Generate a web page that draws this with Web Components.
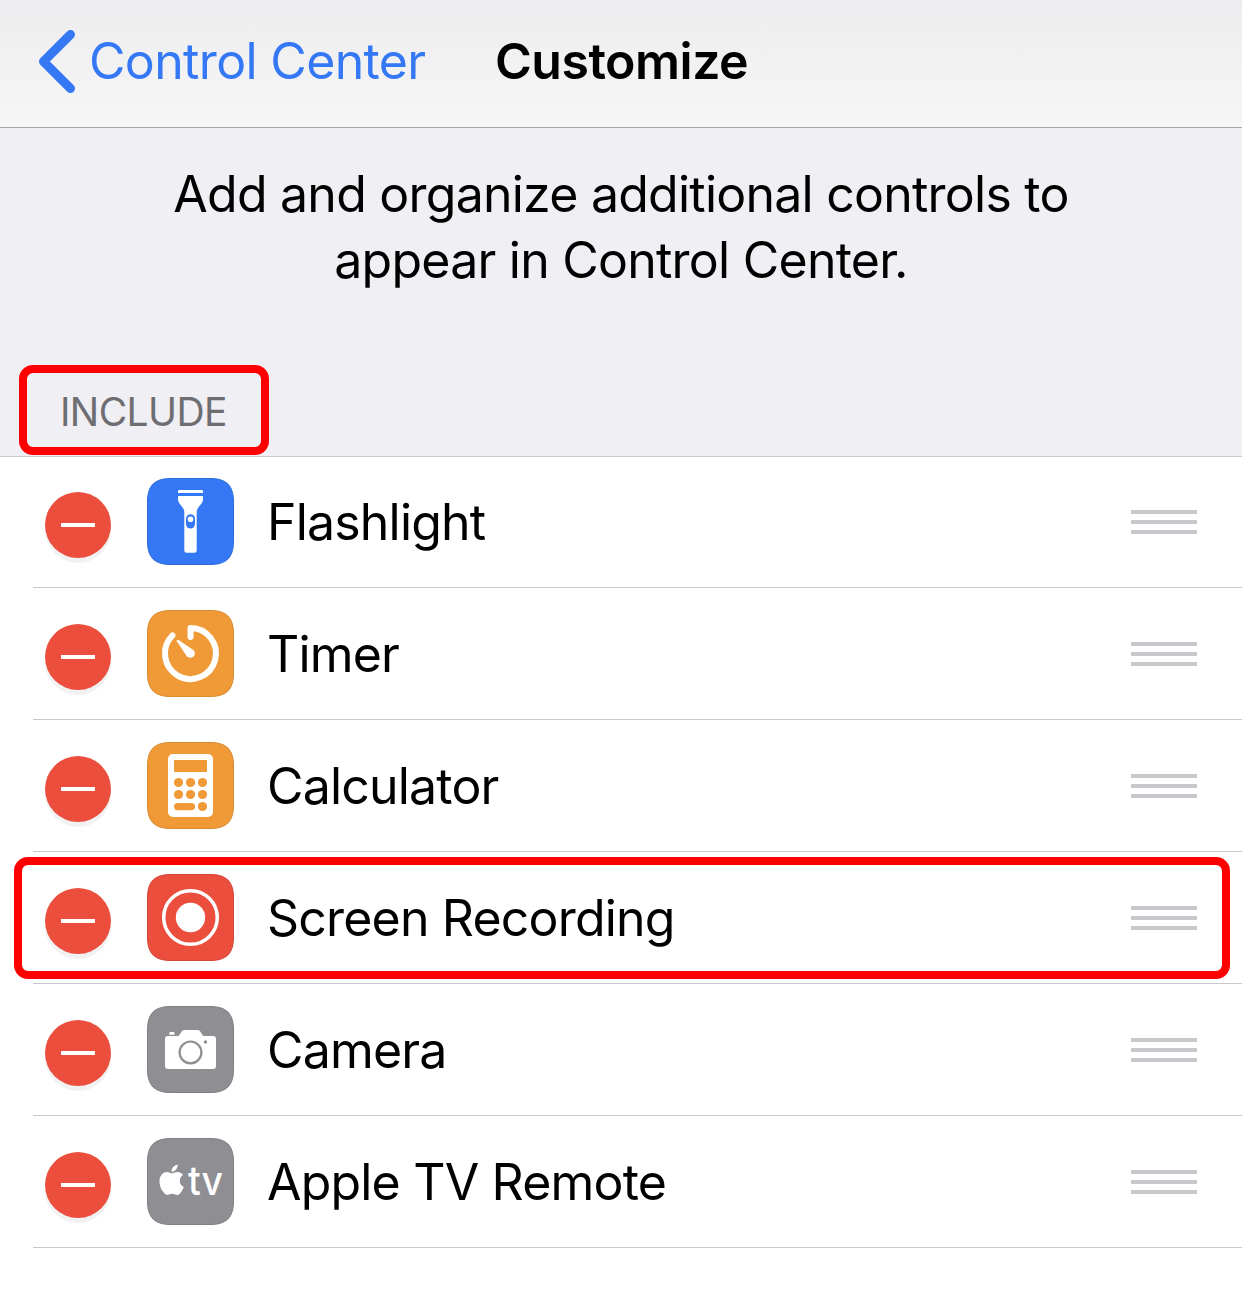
<!DOCTYPE html>
<html lang="en">
<head>
<meta charset="utf-8">
<title>Customize</title>
<style>
html,body{margin:0;padding:0;background:#fff}
body{font-family:Inter,"Liberation Sans",sans-serif;color:#000;-webkit-font-smoothing:antialiased}
</style>
</head>
<body>
<control-settings></control-settings>
<script>
const define = (name, html) => customElements.define(name, class extends HTMLElement {
  constructor() {
    super();
    this.attachShadow({mode: 'open'}).innerHTML = html;
  }
});

const glyphs = {
  flashlight: ['#3478f6', `<path fill="#fff" d="M31 15V13.2Q31 12 32.2 12H54.8Q56 12 56 13.2V15ZM31 18H56V21.5C56 26 49.7 29 49.7 34V72.5Q49.7 74.8 47.4 74.8H39.6Q37.3 74.8 37.3 72.5V34C37.3 29 31 26 31 21.5Z"/><rect x="39" y="36.3" width="9" height="14.2" rx="4.5" fill="#3478f6"/><circle cx="43.5" cy="41.2" r="2.8" fill="#fff"/>`],
  timer: ['#f09a37', `<path fill="none" stroke="#fff" stroke-width="6" stroke-linecap="round" stroke-linejoin="round" d="M43.5 27V18A25.5 25.5 0 1 1 25.5 25.4"/><path fill="#fff" d="M31.2 29.8L46.4 39.9A4.6 4.6 0 1 1 39.8 46.3L29.8 31.2Q29.3 29.3 31.2 29.8Z"/>`],
  calculator: ['#f09a37', `<rect x="21" y="12" width="45" height="63" rx="5" fill="#fff"/><g fill="#f09a37"><rect x="27" y="18" width="33" height="12" rx="1"/><circle cx="31.5" cy="40.5" r="4.6"/><circle cx="43.5" cy="40.5" r="4.6"/><circle cx="55.5" cy="40.5" r="4.6"/><circle cx="31.5" cy="52.5" r="4.6"/><circle cx="43.5" cy="52.5" r="4.6"/><circle cx="55.5" cy="52.5" r="4.6"/><rect x="27" y="61" width="21" height="7.2" rx="3.6"/><circle cx="55.5" cy="64.5" r="4.6"/></g>`],
  record: ['#eb4e3d', `<circle cx="43.5" cy="43.5" r="26.8" fill="none" stroke="#fff" stroke-width="3.5"/><circle cx="43.5" cy="43.5" r="14.7" fill="#fff"/>`],
  camera: ['#8e8e93', `<path fill="#fff" d="M22.3 28.7V27Q22.3 26 23.3 26H26.5Q27.5 26 27.5 27V28.7ZM21 30H30.5C34 30 33.3 24 37.5 24H50.5C54.7 24 54 30 57.5 30H66Q69 30 69 33V60Q69 63 66 63H21Q18 63 18 60V33Q18 30 21 30Z"/><circle cx="43.5" cy="46.4" r="10.9" fill="none" stroke="#8e8e93" stroke-width="2.2"/><circle cx="58.5" cy="36" r="1.7" fill="#8e8e93"/>`],
  tv: ['#8e8e93', `<path fill="#fff" transform="translate(9.7 26.7) scale(1.245 1.26)" d="M12.152 6.896c-.948 0-2.415-1.078-3.96-1.04-2.04.027-3.91 1.183-4.961 3.014-2.117 3.675-.546 9.103 1.519 12.09 1.013 1.454 2.208 3.09 3.792 3.039 1.52-.065 2.09-.987 3.935-.987 1.831 0 2.35.987 3.96.948 1.637-.026 2.676-1.48 3.676-2.948 1.156-1.688 1.636-3.325 1.662-3.415-.039-.013-3.182-1.221-3.22-4.857-.026-3.04 2.48-4.494 2.597-4.559-1.429-2.09-3.623-2.324-4.39-2.376-2-.156-3.675 1.09-4.61 1.09zM15.53 3.83c.843-1.012 1.4-2.427 1.245-3.83-1.207.052-2.662.805-3.532 1.818-.78.896-1.454 2.338-1.273 3.714 1.338.104 2.715-.688 3.559-1.701"/><text x="41" y="56.8" font-size="40" font-weight="500" fill="#fff" textLength="35" lengthAdjust="spacingAndGlyphs">tv</text>`]
};

customElements.define('app-icon', class extends HTMLElement {
  connectedCallback() {
    if (this.shadowRoot) return;
    const [color, art] = glyphs[this.getAttribute('name')];
    this.attachShadow({mode: 'open'}).innerHTML = `<style>:host{display:block;width:87px;height:87px;flex:none}svg{display:block}text{font-family:Inter,sans-serif}</style>
    <svg width="87" height="87" viewBox="0 0 87 87"><path d="M24 .5H63C79.500 .5 86.5 7.500 86.5 24V63C86.5 79.500 79.500 86.5 63 86.5H24C7.500 86.5 .5 79.500 .5 63V24C.5 7.500 7.500 .5 24 .5Z" fill="${color}" stroke="${color}"/><path d="M24 .5H63C79.500 .5 86.5 7.500 86.5 24V63C86.5 79.500 79.500 86.5 63 86.5H24C7.500 86.5 .5 79.500 .5 63V24C.5 7.500 7.500 .5 24 .5Z" fill="none" stroke="#000" stroke-opacity=".1"/>${art}</svg>`;
  }
});

define('remove-button', `<style>:host{display:flex;align-items:center;justify-content:center;flex:none;width:66px;height:66px;border-radius:50%;background:#eb4e3d;box-shadow:0 5px 0 #f2f2f2}i{width:34px;height:4px;background:#fff}</style><i></i>`);

define('drag-handle', `<style>:host{display:flex;flex-direction:column;gap:6px;flex:none;width:66px}i{height:4px;background:#c7c7cc}</style><i></i><i></i><i></i>`);

define('highlight-box', `<style>:host{display:block;position:absolute;box-sizing:border-box;border:8px solid #f00;border-radius:14px;pointer-events:none}</style>`);

define('control-row', `<style>
:host{display:flex;height:132px;box-sizing:border-box;padding-left:33px;position:relative}
.line{flex:1;display:flex;align-items:center;border-bottom:1px solid #c8c7cc;padding:0 45px 0 12px}
remove-button{margin-top:7px}
::slotted(app-icon){margin-left:36px}
.label{flex:1;margin:0 0 0 33px;font-size:50px;line-height:60px;white-space:nowrap;letter-spacing:-.81px}
drag-handle{margin-top:1px}
.mark{display:none}
:host([highlighted]) .mark{display:block;left:14px;right:12px;top:5px;height:122px}
</style>
<div class="line"><remove-button></remove-button><slot name="icon"></slot><span class="label"><slot></slot></span><drag-handle></drag-handle></div>
<highlight-box class="mark"></highlight-box>`);

define('nav-bar', `<style>
:host{display:flex;align-items:center;box-sizing:border-box;height:128px;border-bottom:1px solid #a7a7aa;background:linear-gradient(#ededef,#f6f6f7);padding:0 0 4px 38px}
svg{display:block;flex:none}
.back{font-size:50px;line-height:60px;color:#3478f6;margin:0 0 2px 13px;width:406px;white-space:nowrap;letter-spacing:-.65px}
.title{font-size:50px;line-height:60px;font-weight:600;margin-bottom:2px;white-space:nowrap;letter-spacing:-.5px}
</style>
<svg width="38" height="64" viewBox="38 30 38 64"><path d="M70.5 34.5L43.5 61.5L70.5 88.5" fill="none" stroke="#3478f6" stroke-width="9" stroke-linecap="round" stroke-linejoin="round"/></svg>
<span class="back"><slot name="back"></slot></span><span class="title"><slot></slot></span>`);

define('section-intro', `<style>
:host{display:flex;flex-direction:column;justify-content:space-between;box-sizing:border-box;height:329px;background:#efeff4;border-bottom:1px solid #c8c7cc;padding-top:33px;position:relative}
.text{text-align:center;font-size:50px;line-height:66px;white-space:nowrap;letter-spacing:-.76px}
.head{padding:0 0 20px 60px;font-size:39px;line-height:48px;color:#6d6d72;letter-spacing:-.6px}
highlight-box{left:19px;top:237px;width:250px;height:90px}
</style>
<div class="text"><slot></slot></div><div class="head"><slot name="head"></slot></div><highlight-box></highlight-box>`);

define('control-settings', `<style>:host{display:block;width:1242px;height:1300px;background:#fff;overflow:hidden}main{margin-top:-1px}</style>
<nav-bar><span slot="back">Control Center</span>Customize</nav-bar>
<section-intro><span>Add and organize additional controls to</span><br><span>appear in Control Center.</span><span slot="head">INCLUDE</span></section-intro>
<main>
<control-row><app-icon slot="icon" name="flashlight"></app-icon>Flashlight</control-row>
<control-row><app-icon slot="icon" name="timer"></app-icon>Timer</control-row>
<control-row><app-icon slot="icon" name="calculator"></app-icon>Calculator</control-row>
<control-row highlighted><app-icon slot="icon" name="record"></app-icon>Screen Recording</control-row>
<control-row><app-icon slot="icon" name="camera"></app-icon>Camera</control-row>
<control-row><app-icon slot="icon" name="tv"></app-icon>Apple TV Remote</control-row>
</main>`);
</script>
</body>
</html>
